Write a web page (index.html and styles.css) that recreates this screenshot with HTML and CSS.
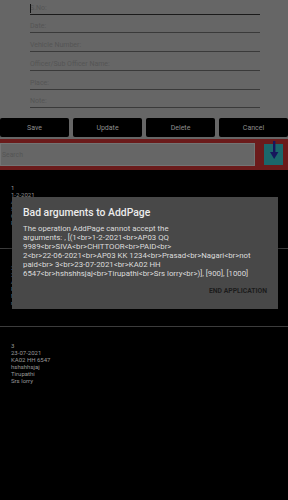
FILE: index.html
```html
<!DOCTYPE html>
<html lang="en">
<head>
<meta charset="UTF-8" />
<title>Vehicle Register</title>
<link rel="stylesheet" href="styles.css">
</head>
<body>

<div class="entry-form">
    <div class="field first"><span class="caret"></span><span class="hint">S.No:</span></div>
    <div class="field"><span class="hint">Date:</span></div>
    <div class="field"><span class="hint">Vehicle Number:</span></div>
    <div class="field"><span class="hint">Officer/Sub Officer Name:</span></div>
    <div class="field"><span class="hint">Place:</span></div>
    <div class="field"><span class="hint">Note:</span></div>

    <div class="actions">
        <button>Save</button>
        <button>Update</button>
        <button>Delete</button>
        <button>Cancel</button>
    </div>
</div>

<div class="search-bar">
    <div class="search-box">Search</div>
    <div class="search-btn">
        <svg width="14" height="22" viewBox="0 0 14 22">
            <rect x="6" y="0" width="2.4" height="15" fill="#16165c"/>
            <polygon points="3,11 11.4,11 7.2,18" fill="#16165c"/>
        </svg>
    </div>
</div>

<div class="record-list">
    <div class="record">1<br>1-2-2021<br>AP03 QQ 9989<br>SIVA<br>CHITTOOR<br>PAID</div>
    <div class="record">2<br>22-06-2021<br>AP03 KK 1234<br>Prasad<br>Nagari<br>not paid</div>
    <div class="record">3<br>23-07-2021<br>KA02 HH 6547<br>hshshhsjaj<br>Tirupathi<br>Srs lorry</div>
</div>

<!-- Dialog de erro -->
<div class="dialog">
    <div class="dialog-title">Bad arguments to AddPage</div>
    <div class="dialog-text">
        The operation AddPage cannot accept the<br>
        arguments: , [(1&lt;br&gt;1-2-2021&lt;br&gt;AP03 QQ<br>
        9989&lt;br&gt;SIVA&lt;br&gt;CHITTOOR&lt;br&gt;PAID&lt;br&gt;<br>
        2&lt;br&gt;22-06-2021&lt;br&gt;AP03 KK 1234&lt;br&gt;Prasad&lt;br&gt;Nagari&lt;br&gt;not<br>
        paid&lt;br&gt; 3&lt;br&gt;23-07-2021&lt;br&gt;KA02 HH<br>
        6547&lt;br&gt;hshshhsjaj&lt;br&gt;Tirupathi&lt;br&gt;Srs lorry&lt;br&gt;)], [900], [1000]
    </div>
    <div class="dialog-actions">END APPLICATION</div>
</div>

</body>
</html>
```

FILE: styles.css
```css
body {
    margin: 0;
    padding: 0;
    font-family: Roboto, 'Liberation Sans', sans-serif;
    background-color: #000000;
    position: relative;
    min-height: 500px;
    overflow: hidden;
}

.entry-form {
    background-color: #666666;
    height: 139px;
    box-sizing: border-box;
    padding-bottom: 2px;
    display: flex;
    flex-direction: column;
}

.field {
    margin: 0 28px 0 30px;
    height: 17.8px;
    flex-shrink: 0;
    display: flex;
    align-items: flex-end;
    border-bottom: 1.5px solid #3a3a3a;
    position: relative;
}

.field.first {
    height: 13.5px;
    border-bottom-color: #1a1a1a;
}

.hint {
    font-size: 7px;
    line-height: 8px;
    color: #555555;
    padding-bottom: 2px;
}

.caret {
    position: absolute;
    left: 0;
    top: 4px;
    width: 1px;
    height: 9px;
    background-color: #111;
}

.actions {
    display: flex;
    gap: 4px;
    margin-top: auto;
}

.actions button {
    flex: 1;
    height: 19px;
    border: none;
    border-radius: 2px;
    background-color: #000000;
    color: #8e8e8e;
    font-family: Roboto, 'Liberation Sans', sans-serif;
    font-size: 7px;
    padding: 0;
}

.search-bar {
    background-color: #6b1b1b;
    height: 31px;
    display: flex;
    align-items: center;
    padding-right: 4px;
}

.search-box {
    width: 255px;
    height: 23px;
    box-sizing: border-box;
    background-color: #666666;
    border: 1px solid #747474;
    font-size: 6.8px;
    color: #555555;
    display: flex;
    align-items: center;
    padding-left: 1px;
}

.search-btn {
    margin-left: 9px;
    width: 19px;
    height: 21px;
    background-color: #1b676b;
    position: relative;
}

.search-btn svg {
    position: absolute;
    left: 2.5px;
    top: -3px;
}

.record {
    height: 78px;
    box-sizing: border-box;
    padding: 14.5px 11px 0;
    border-bottom: 1px solid #3c3c3c;
    font-size: 6px;
    line-height: 7px;
    color: #9a9a9a;
}

.record:first-child {
    height: 79px;
    padding-top: 13.5px;
}

.record:last-child {
    border-bottom: none;
}

/* Dialog */
.dialog {
    position: absolute;
    left: 12px;
    top: 197px;
    width: 266px;
    height: 112px;
    box-sizing: border-box;
    background-color: #484848;
    padding: 9px 11px 0;
    box-shadow: 0 2px 6px rgba(0, 0, 0, 0.5);
}

.dialog-title {
    font-size: 10.4px;
    font-weight: 500;
    color: #ececec;
    line-height: 14px;
}

.dialog-text {
    margin-top: 4px;
    font-size: 7.8px;
    line-height: 9px;
    color: #dcdcdc;
    white-space: nowrap;
}

.dialog-actions {
    margin-top: 9px;
    text-align: right;
    font-size: 6.8px;
    font-weight: bold;
    color: #1c1c1c;
}
```
